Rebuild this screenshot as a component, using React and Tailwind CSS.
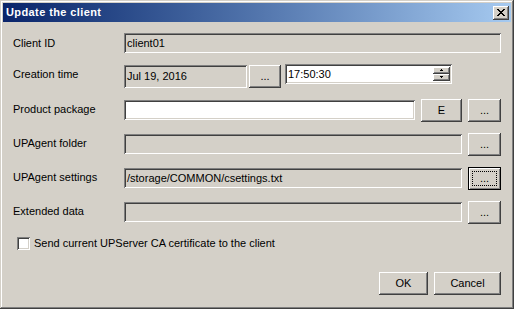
import React from "react";

const raised =
  "bg-[#d4d0c8] shadow-[inset_-1px_-1px_0_#404040,inset_1px_1px_0_#ffffff,inset_-2px_-2px_0_#808080]";
const focused =
  "bg-[#d4d0c8] shadow-[inset_0_0_0_1px_#000000,inset_2px_2px_0_#ffffff,inset_-2px_-2px_0_#808080]";
const sunken =
  "shadow-[inset_1px_1px_0_#808080,inset_-1px_-1px_0_#ffffff,inset_2px_2px_0_#404040,inset_-2px_-2px_0_#d4d0c8]";

function Btn({ w, children, focus }) {
  return (
    <div
      className={`${focus ? focused : raised} h-[23px] shrink-0 flex items-center justify-center relative`}
      style={{ width: w }}
    >
      {focus && (
        <div className="absolute left-[4px] top-[4px] right-[4px] bottom-[4px] border border-dotted border-black" />
      )}
      <span className="relative">{children}</span>
    </div>
  );
}

function Field({ w, children, white, h = 20, className = "" }) {
  return (
    <div
      className={`${sunken} ${white ? "bg-white" : "bg-[#d4d0c8]"} shrink-0 flex items-center pl-[3px] ${className}`}
      style={{ width: w, height: h }}
    >
      {children}
    </div>
  );
}

function Label({ children }) {
  return (
    <div className="w-[111px] h-[20px] shrink-0 flex items-center">{children}</div>
  );
}

function Row({ children }) {
  return <div className="flex items-start mt-[11px] h-[23px]">{children}</div>;
}

export default function App() {
  return (
    <div className="w-[514px] h-[309px] bg-[#d4d0c8] font-['Liberation_Sans',Arial,sans-serif] text-[11px] text-black leading-none p-[3px] flex flex-col shadow-[inset_-1px_-1px_0_#404040,inset_1px_1px_0_#d4d0c8,inset_-2px_-2px_0_#808080,inset_2px_2px_0_#ffffff]">
      {/* Title bar */}
      <div className="h-[19px] shrink-0 bg-linear-to-r from-[#0a246a] to-[#a6caf0] flex items-center justify-between pl-[3px] pr-[2px]">
        <span className="text-white font-bold tracking-[0.4px]">Update the client</span>
        <div className={`${raised} w-[16px] h-[14px] flex items-center justify-center`}>
          <svg width="8" height="7" viewBox="0 0 8 7" shapeRendering="crispEdges">
            <path
              fill="#000"
              d="M0 0h2v1h-2zM6 0h2v1h-2zM1 1h2v1h-2zM5 1h2v1h-2zM2 2h4v1h-4zM3 3h2v1h-2zM2 4h4v1h-4zM1 5h2v1h-2zM5 5h2v1h-2zM0 6h2v1h-2zM6 6h2v1h-2z"
            />
          </svg>
        </div>
      </div>

      {/* Body */}
      <div className="flex flex-col pl-[10px] pr-[10px]">
        <div className="flex items-center mt-[11px] h-[20px]">
          <Label>Client ID</Label>
          <Field w={377}>client01</Field>
        </div>

        <div className="flex items-start mt-[11px] h-[24px]">
          <Label>Creation time</Label>
          <Field w={123} h={23} className="mt-[1px]">Jul 19, 2016</Field>
          <div className="ml-[2px] mt-[1px]">
            <Btn w={32}>...</Btn>
          </div>
          <div
            className={`${sunken} bg-white ml-[4px] w-[167px] h-[20px] flex items-center justify-between pl-[3px] pr-[2px]`}
          >
            <span>17:50:30</span>
            <div className="flex flex-col w-[17px]">
              <div className={`${raised} h-[7px] flex items-center justify-center`}>
                <svg width="5" height="3" viewBox="0 0 5 3" shapeRendering="crispEdges">
                  <path fill="#000" d="M2 0h1v1h-1zM1 1h3v1h-3z" />
                </svg>
              </div>
              <div className={`${raised} h-[7px] flex items-center justify-center`}>
                <svg width="5" height="3" viewBox="0 0 5 3" shapeRendering="crispEdges">
                  <path fill="#000" d="M1 0h3v1h-3zM2 1h1v1h-1z" />
                </svg>
              </div>
            </div>
          </div>
        </div>

        <Row>
          <Label>Product package</Label>
          <Field w={291} white className="mt-[1px]" />
          <div className="ml-[6px]">
            <Btn w={41}>E</Btn>
          </div>
          <div className="ml-[6px]">
            <Btn w={33}>...</Btn>
          </div>
        </Row>

        <Row>
          <Label>UPAgent folder</Label>
          <Field w={338} className="mt-[1px]" />
          <div className="ml-[6px]">
            <Btn w={33}>...</Btn>
          </div>
        </Row>

        <Row>
          <Label>UPAgent settings</Label>
          <Field w={338} className="mt-[1px]">/storage/COMMON/csettings.txt</Field>
          <div className="ml-[6px]">
            <Btn w={33} focus>...</Btn>
          </div>
        </Row>

        <Row>
          <Label>Extended data</Label>
          <Field w={338} className="mt-[1px]" />
          <div className="ml-[6px]">
            <Btn w={33}>...</Btn>
          </div>
        </Row>

        <div className="flex items-center mt-[13px] h-[13px] pl-[4px]">
          <div className={`${sunken} bg-white w-[13px] h-[13px] shrink-0`} />
          <span className="ml-[4px]">Send current UPServer CA certificate to the client</span>
        </div>

        <div className="flex justify-end mt-[22px] gap-[6px]">
          <Btn w={49}>OK</Btn>
          <Btn w={67}>Cancel</Btn>
        </div>
      </div>
    </div>
  );
}
